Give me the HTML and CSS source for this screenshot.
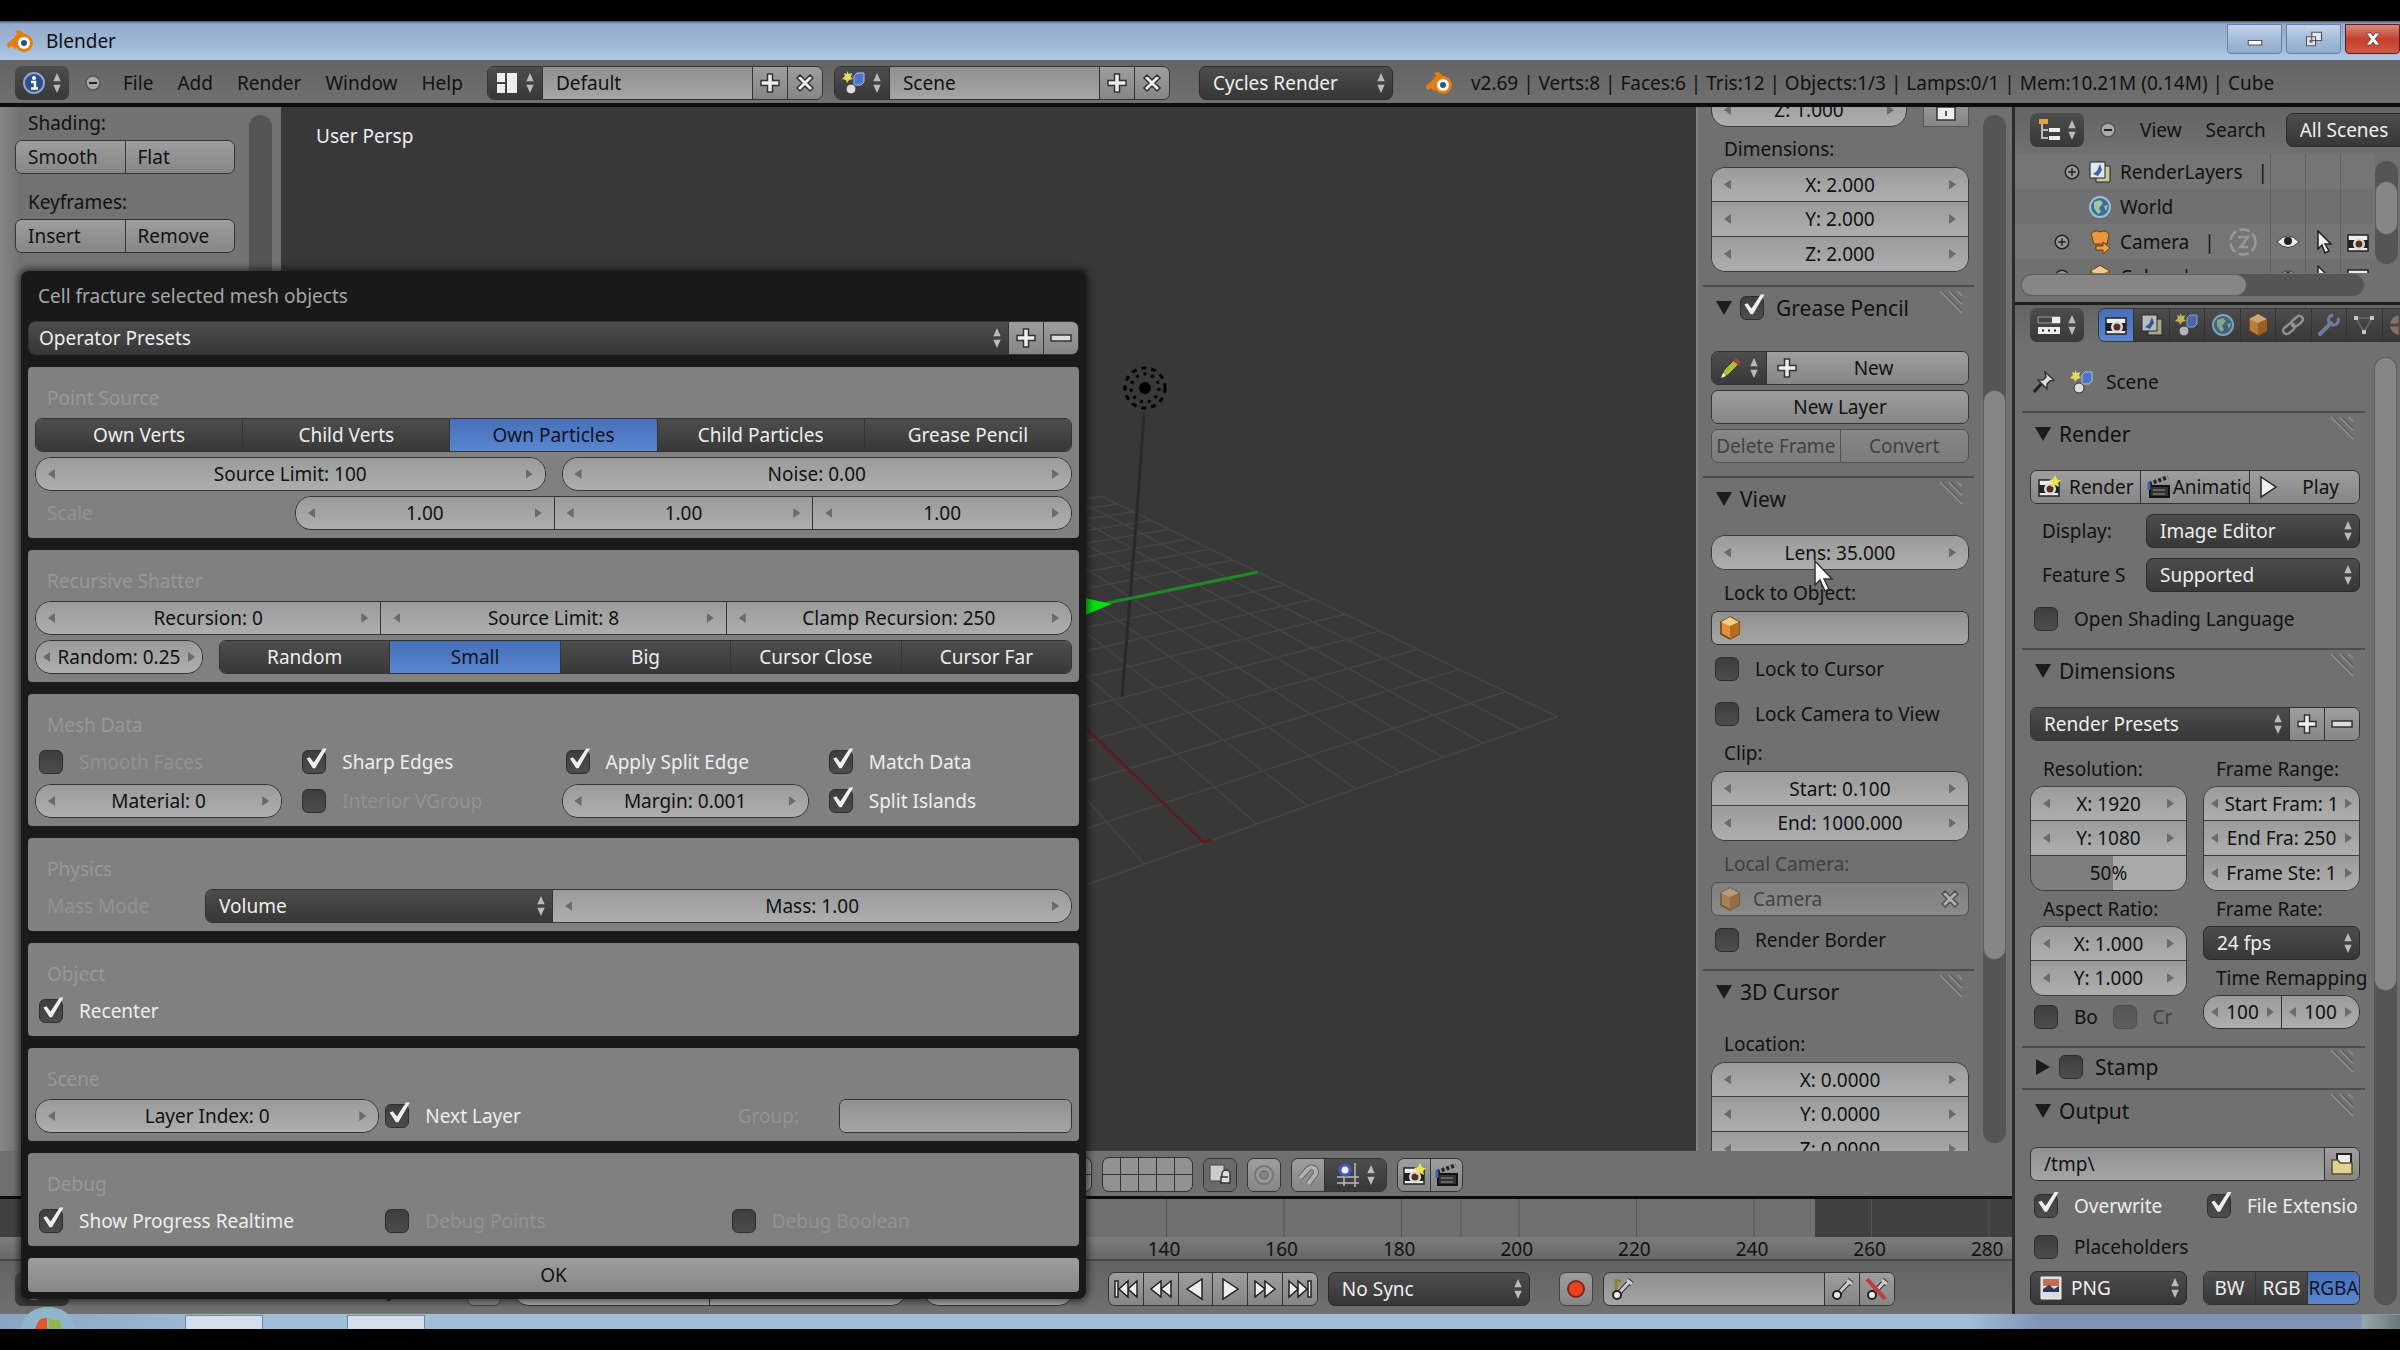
FILE: index.html
```html
<!DOCTYPE html>
<html lang="en">
  <head>
    <meta charset="UTF-8" />
    <meta name="viewport" content="width=device-width, initial-scale=1.0" />
    <title>Blender</title>
    <link rel="stylesheet" href="styles.css">
  </head>
  <body>
    <!-- shared icons -->
    <svg class="defs" aria-hidden="true">
      <symbol id="updown" viewBox="0 0 10 24"><path d="M5 1l4 9H1zM5 23l4-9H1z" fill="#bbb" /></symbol>
      <symbol id="plus" viewBox="0 0 24 24"><path d="M9.500 3h5v6.500H21v5h-6.500V21h-5v-6.500H3v-5h6.500z" fill="#eee" stroke="#333" stroke-width="1.500" /></symbol>
      <symbol id="minus" viewBox="0 0 24 24"><path d="M2 9h20v6H2z" fill="#ddd" stroke="#333" stroke-width="1.500" /></symbol>
      <symbol id="cross" viewBox="0 0 24 24"><path d="M4 7l3-3 5 5 5-5 3 3-5 5 5 5-3 3-5-5-5 5-3-3 5-5z" fill="#eee" stroke="#333" stroke-width="1.500" /></symbol>
      <symbol id="collapse" viewBox="0 0 24 24"><circle cx="12" cy="12" r="7" fill="#aaa" stroke="#555" stroke-width="1.500" /><path d="M8 12h8" stroke="#222" stroke-width="2" /></symbol>
      <symbol id="grip" viewBox="0 0 24 24"><path d="M2 2l20 20M10 2l12 12M18 2l4 4" stroke="#8c8c8c" stroke-width="1.500" /><path d="M4 2l18 18M12 2l10 10" stroke="#5d5d5d" stroke-width="1" /></symbol>
      <symbol id="logo" viewBox="0 0 28 24">
        <path d="M1 15l9-8-4-1h6L9 2l4-1 10 7-14 12-3-3-4 2z" fill="#e87d0d" />
        <circle cx="18" cy="14" r="9" fill="#e87d0d" /><circle cx="18" cy="14" r="6" fill="#fff" /><circle cx="18" cy="14" r="3" fill="#265787" />
      </symbol>
      <symbol id="info" viewBox="0 0 24 24"><circle cx="12" cy="12" r="10" fill="#2f4f86" stroke="#8ea6cf" stroke-width="2" /><circle cx="12" cy="7" r="2" fill="#fff" /><path d="M9 11h4v6M9 17.500h7" stroke="#fff" stroke-width="2.500" fill="none" /></symbol>
      <symbol id="screens" viewBox="0 0 24 24"><path d="M2 2h8v9H2zM2 13h8v9H2zM12 2h10v20H12z" fill="#eee" /></symbol>
      <symbol id="scene" viewBox="0 0 24 24"><path d="M5 0l2 3 3-1-1 4 2 2-4 1-2 3-1-3-4-1 3-3-1-3 3 1z" fill="#e6dc5a" /><path d="M12 5l3-3h7v9l-3 3h-7z" fill="#4d74c8" stroke="#a9c0ee" /><circle cx="9" cy="18" r="5" fill="#ddd" stroke="#333" /></symbol>
      <symbol id="tree" viewBox="0 0 24 24"><path d="M2 1h9v5H2z" fill="#dfa046" /><path d="M5 6v14h6M5 12h6" stroke="#bbb" stroke-width="2" fill="none" /><path d="M12 10h11v4H12zM12 18h11v4H12z" fill="#eee" /></symbol>
      <symbol id="props" viewBox="0 0 24 24"><path d="M1 4h22v6H1z" fill="#444" stroke="#999" /><path d="M15 4h8v6h-8z" fill="#eee" /><path d="M1 14h22v7H1z" fill="#eee" /><path d="M5 17.500h2m4 0h2m4 0h2" stroke="#222" stroke-width="2" /></symbol>
      <symbol id="cam" viewBox="0 0 24 24"><path d="M2 5h20v16H2z" fill="#eee" stroke="#222" stroke-width="1.500" /><path d="M2 10h20v8H2z" fill="#222" /><circle cx="13" cy="14" r="6" fill="#ddd" /><circle cx="13" cy="14" r="3.500" fill="#5a2f22" /></symbol>
      <symbol id="camstar" viewBox="0 0 24 24"><use href="#cam" /><path d="M18 0l2 4 4 1-3 3 1 4-4-2-4 2 1-4-3-3 4-1z" fill="#ece253" /></symbol>
      <symbol id="clap" viewBox="0 0 24 24"><path d="M3 11h19v11H3z" fill="#333" stroke="#111" stroke-width="2" /><path d="M2 9L21 2" stroke="#222" stroke-width="4" stroke-dasharray="3 2" /><path d="M6 15h12M6 19h12" stroke="#999" /><path d="M2 7v8" stroke="#3d64b0" stroke-width="3" /></symbol>
      <symbol id="play" viewBox="0 0 24 24"><path d="M5 2l15 10L5 22z" fill="#eee" stroke="#222" stroke-width="1.500" /></symbol>
      <symbol id="fwd" viewBox="0 0 24 24"><path d="M2 4l10 8-10 8zM12 4l10 8-10 8z" fill="#eee" stroke="#222" stroke-width="1.500" /></symbol>
      <symbol id="end" viewBox="0 0 24 24"><path d="M1 4l9 8-9 8zM10 4l9 8-9 8zM20 4h3v16h-3z" fill="#eee" stroke="#222" stroke-width="1.500" /></symbol>
      <symbol id="layers" viewBox="0 0 24 24"><path d="M8 6h14v16H8z" fill="#cfc7a0" stroke="#222" /><path d="M2 2h15v16H2z" fill="#dfe6ee" stroke="#222" /><path d="M5 14l4-3 3-7 2 6-4 6z" fill="#3a62ad" /></symbol>
      <symbol id="world" viewBox="0 0 24 24"><circle cx="12" cy="12" r="10" fill="#3d6f92" stroke="#9cc0dd" stroke-width="2" /><path d="M6 7l6-2 3 3-4 5 2 4-3 2-4-6zM16 11l4-1-2 6z" fill="#9fc6a4" /></symbol>
      <symbol id="cube" viewBox="0 0 24 24"><path d="M12 1l9 5v12l-9 5-9-5V6z" fill="#e0923d" stroke="#6b3d0d" stroke-width="1.500" /><path d="M12 1l9 5-9 4-9-4z" fill="#f7c98c" /><path d="M12 10l9-4v12l-9 5z" fill="#b96a1c" /></symbol>
      <symbol id="camobj" viewBox="0 0 24 24"><path d="M3 4q4-5 9-2 7-3 9 3l-2 9H6z" fill="#e8973a" stroke="#6b3d0d" /><path d="M8 16h7v-4l7 6-7 6v-4H8z" fill="#f0a040" stroke="#6b3d0d" /></symbol>
      <symbol id="chain" viewBox="0 0 24 24"><g fill="none" stroke="#aaa" stroke-width="2.500"><rect x="1" y="12" width="13" height="7" rx="3.500" transform="rotate(-40 8 15)" /><rect x="10" y="5" width="13" height="7" rx="3.500" transform="rotate(-40 16 9)" /></g></symbol>
      <symbol id="wrench" viewBox="0 0 24 24"><path d="M3 21l11-11" stroke="#7d93bd" stroke-width="4" stroke-linecap="round" /><path d="M21 5a5 5 0 1 1-5-3" fill="none" stroke="#7d93bd" stroke-width="3" /></symbol>
      <symbol id="mesh" viewBox="0 0 24 24"><path d="M4 5h16l-8 14z" fill="none" stroke="#777" stroke-width="1.500" /><path d="M2 3h4v4H2zM18 3h4v4h-4zM10 17h4v4h-4z" fill="#eee" /></symbol>
      <symbol id="ball" viewBox="0 0 24 24"><circle cx="12" cy="12" r="10" fill="#9c8078" /><path d="M12 2v20M2 12h20" stroke="#5b4a45" stroke-width="3" /></symbol>
      <symbol id="pin" viewBox="0 0 24 24"><path d="M2 22l8-9" stroke="#222" stroke-width="3" /><path d="M13 2l9 8-4 1-3 3 0 5-9-9 5 0 3-3z" fill="#ddd" stroke="#333" stroke-width="1.500" /></symbol>
      <symbol id="pencil" viewBox="0 0 24 24"><path d="M2 22l3-8L17 2l5 4L9 19z" fill="#aebd3a" stroke="#3b4210" /><path d="M17 2l5 4-3 3-5-4z" fill="#b03a3a" /><path d="M2 22l2-5 3 3z" fill="#eee" /></symbol>
      <symbol id="lock" viewBox="0 0 24 24"><path d="M3 9h18v13H3z" fill="#eee" stroke="#333" stroke-width="1.500" /><path d="M7 9V4h10v5" fill="none" stroke="#ddd" stroke-width="3" /><path d="M12 13v5" stroke="#555" stroke-width="2" /></symbol>
      <symbol id="locklay" viewBox="0 0 24 24"><path d="M2 2h14v16H2z" fill="#ccc" stroke="#444" /><path d="M14 14v-3a4 4 0 0 1 8 0v9h-9v-6h7" fill="#ddd" stroke="#333" stroke-width="1.500" /></symbol>
      <symbol id="ring" viewBox="0 0 24 24"><circle cx="12" cy="12" r="9" fill="#999" stroke="#777" stroke-width="2" /><circle cx="12" cy="12" r="4" fill="#888" stroke="#6b6b6b" stroke-width="1.500" /></symbol>
      <symbol id="magnet" viewBox="0 0 24 24"><path d="M4 15L12 6a4 4 0 0 1 7 6l-7 9" fill="none" stroke="#666" stroke-width="6" /><path d="M4 15L12 6a4 4 0 0 1 7 6l-7 9" fill="none" stroke="#b0b0b0" stroke-width="4" /></symbol>
      <symbol id="snap" viewBox="0 0 24 24"><path d="M8 8v15M19 0v24M1 20h22M1 14h22" stroke="#bbb" stroke-width="1.500" /><circle cx="9" cy="7" r="5" fill="#eee" stroke="#4258c9" stroke-width="3" /></symbol>
      <symbol id="key" viewBox="0 0 24 24"><path d="M9 16L20 4M17 3l5 4" stroke="#333" stroke-width="5" /><path d="M9 16L20 4M17 3l5 4" stroke="#ccc" stroke-width="3" /><circle cx="7" cy="18" r="4" fill="#eee" stroke="#222" stroke-width="2" /></symbol>
      <symbol id="keys" viewBox="0 0 24 24"><path d="M6 2v14M6 4h5" stroke="#8b8330" stroke-width="3" /><use href="#key" /></symbol>
      <symbol id="keyoff" viewBox="0 0 24 24"><use href="#key" /><path d="M2 2l18 20" stroke="#c23c3c" stroke-width="4" /></symbol>
      <symbol id="eye" viewBox="0 0 24 24"><path d="M1 12q11-12 22 0-11 11-22 0z" fill="#eee" stroke="#333" /><circle cx="12" cy="11" r="4" fill="#222" /></symbol>
      <symbol id="pointer" viewBox="0 0 24 24"><path d="M7 1v18l4-4 3 8 4-2-4-7h6z" fill="#eee" stroke="#222" stroke-width="1.500" /></symbol>
      <symbol id="folder" viewBox="0 0 24 24"><path d="M7 2h14v14H7z" fill="#eee" stroke="#222" stroke-width="2" /><path d="M2 8l6 0 2 3h12v11H2z" fill="#e0d296" stroke="#5c5222" stroke-width="1.500" /></symbol>
      <symbol id="image" viewBox="0 0 24 24"><path d="M2 1h20v22H2z" fill="#ddd" stroke="#eee" /><path d="M4 3h16v7H4z" fill="#c66b56" /><path d="M4 13l6-4 5 4 5-3v6H4z" fill="#35355c" /></symbol>
      <symbol id="dataring" viewBox="0 0 24 24"><circle cx="12" cy="12" r="10" fill="none" stroke="#999" stroke-width="2" stroke-dasharray="8 3" /><path d="M8 8l8 0-6 8h6" fill="none" stroke="#999" stroke-width="2" /></symbol>
      <symbol id="expand" viewBox="0 0 24 24"><circle cx="12" cy="12" r="9" fill="#999" stroke="#222" stroke-width="2" /><path d="M7 12h10M12 7v10" stroke="#222" stroke-width="2" /></symbol>
      <symbol id="down" viewBox="0 0 16 16"><path d="M0 1h16L8 15z" fill="#1c1c1c" /></symbol>
      <symbol id="right" viewBox="0 0 16 16"><path d="M1 0l14 8-14 8z" fill="#1c1c1c" /></symbol>
    </svg>

    <header class="titlebar">
      <svg class="icon"><use href="#logo" /></svg>
      <h1>Blender</h1>
      <button class="win" aria-label="Minimize"><svg viewBox="0 0 24 24"><path d="M3 14h18v6H3z" fill="#fff" stroke="#555" stroke-width="1.500" /></svg></button>
      <button class="win" aria-label="Restore"><svg viewBox="0 0 24 24"><path d="M9 3h13v11H9zM2 9h12v12H2z" fill="#dfe7f2" stroke="#555" stroke-width="1.500" /><path d="M6 13h4v4H6z" fill="#667" /></svg></button>
      <button class="win close" aria-label="Close"><svg viewBox="0 0 24 24"><path d="M3 4h6l3 4 3-4h6l-6 8 6 8h-6l-3-4-3 4H3l6-8z" fill="#fff" stroke="#633" /></svg></button>
    </header>

    <header class="bar info">
      <button class="dark editor" aria-label="Editor type: Info"><svg class="icon"><use href="#info" /></svg><svg class="ud"><use href="#updown" /></svg></button>
      <button class="plain" aria-label="Collapse menus"><svg class="icon"><use href="#collapse" /></svg></button>
      <nav class="menus">
        <button class="plain">File</button>
        <button class="plain">Add</button>
        <button class="plain">Render</button>
        <button class="plain">Window</button>
        <button class="plain">Help</button>
      </nav>
      <div class="join datablock">
        <button class="dark editor" aria-label="Browse screens"><svg class="icon"><use href="#screens" /></svg><svg class="ud"><use href="#updown" /></svg></button>
        <input class="text" value="Default" aria-label="Screen" />
        <button class="btn sq" aria-label="Add screen"><svg class="icon"><use href="#plus" /></svg></button>
        <button class="btn sq" aria-label="Delete screen"><svg class="icon"><use href="#cross" /></svg></button>
      </div>
      <div class="join datablock">
        <button class="dark editor" aria-label="Browse scenes"><svg class="icon"><use href="#scene" /></svg><svg class="ud"><use href="#updown" /></svg></button>
        <input class="text" value="Scene" aria-label="Scene" />
        <button class="btn sq" aria-label="Add scene"><svg class="icon"><use href="#plus" /></svg></button>
        <button class="btn sq" aria-label="Delete scene"><svg class="icon"><use href="#cross" /></svg></button>
      </div>
      <div class="menu engine"><select aria-label="Render engine"><option>Cycles Render</option></select><svg class="ud"><use href="#updown" /></svg></div>
      <svg class="icon"><use href="#logo" /></svg>
      <p class="stats">v2.69 | Verts:8 | Faces:6 | Tris:12 | Objects:1/3 | Lamps:0/1 | Mem:10.21M (0.14M) | Cube</p>
    </header>

    <main class="work">
      <div class="left">
        <section class="editor3d">
          <aside class="shelf">
            <div class="shelf-body">
              <h3>Shading:</h3>
              <div class="join"><button class="btn">Smooth</button><button class="btn">Flat</button></div>
              <h3>Keyframes:</h3>
              <div class="join"><button class="btn">Insert</button><button class="btn">Remove</button></div>
            </div>
            <div class="track"></div>
          </aside>

          <div class="view">
            <svg class="scene" viewBox="281 107 1415 1046" preserveAspectRatio="xMidYMid slice">
              <g id="grid" stroke="#444" stroke-width="1.500"></g>
              <path d="M1144 415L1136 525L1122 698" stroke="#292929" stroke-width="3" fill="none" />
              <path d="M1088 608L1258 573" stroke="#1b8a25" stroke-width="3" />
              <path d="M1080 598L1112 605L1080 618z" fill="#00e010" />
              <path d="M983 629L1203 843L1212 841" stroke="#5a2020" stroke-width="3" fill="none" />
              <g fill="none" stroke="#000" stroke-width="3">
                <circle cx="1145" cy="389" r="20" stroke-dasharray="5 5" />
                <circle cx="1145" cy="389" r="14" stroke-dasharray="3 5" />
              </g>
              <circle cx="1145" cy="389" r="6" fill="#000" />
            </svg>
            <p>User Persp</p>
          </div>

          <aside class="npanel">
            <div class="ncol">
              <div class="cut">
                <label class="num"><input value="Z: 1.000" aria-label="Scale Z" /></label>
                <button class="btn" aria-label="Lock scale Z"><svg class="icon"><use href="#lock" /></svg></button>
              </div>
              <div class="group">
                <h3>Dimensions:</h3>
                <div class="stack">
                  <label class="num"><input value="X: 2.000" aria-label="Dimension X" /></label>
                  <label class="num"><input value="Y: 2.000" aria-label="Dimension Y" /></label>
                  <label class="num"><input value="Z: 2.000" aria-label="Dimension Z" /></label>
                </div>
              </div>

              <section class="panel">
                <h2><svg class="tri"><use href="#down" /></svg><input type="checkbox" id="gp" checked /><label for="gp">Grease Pencil</label><svg class="grip"><use href="#grip" /></svg></h2>
                <div class="body spaced">
                  <div class="join">
                    <button class="dark editor" aria-label="Browse grease pencil"><svg class="icon"><use href="#pencil" /></svg><svg class="ud"><use href="#updown" /></svg></button>
                    <button class="btn new"><svg class="icon"><use href="#plus" /></svg><span>New</span></button>
                  </div>
                  <div class="join"><button class="btn">New Layer</button></div>
                  <div class="join off"><button class="btn" disabled>Delete Frame</button><button class="btn" disabled>Convert</button></div>
                </div>
              </section>

              <section class="panel">
                <h2><svg class="tri"><use href="#down" /></svg>View<svg class="grip"><use href="#grip" /></svg></h2>
                <div class="body">
                  <div class="stack"><label class="num"><input value="Lens: 35.000" aria-label="Lens" /></label></div>
                  <div>
                    <h3><label for="lockobj">Lock to Object:</label></h3>
                    <div class="join idfield"><svg class="icon"><use href="#cube" /></svg><input class="text" id="lockobj" /></div>
                  </div>
                  <div class="check"><input type="checkbox" id="lcur" /><label for="lcur">Lock to Cursor</label></div>
                  <div class="check apart"><input type="checkbox" id="lcam" /><label for="lcam">Lock Camera to View</label></div>
                  <div>
                    <h3>Clip:</h3>
                    <div class="stack">
                      <label class="num"><input value="Start: 0.100" aria-label="Clip start" /></label>
                      <label class="num"><input value="End: 1000.000" aria-label="Clip end" /></label>
                    </div>
                  </div>
                  <div class="off">
                    <h3><label for="locam">Local Camera:</label></h3>
                    <div class="join idfield"><svg class="icon"><use href="#cube" /></svg><input class="text" id="locam" value="Camera" disabled /><svg class="icon"><use href="#cross" /></svg></div>
                  </div>
                  <div class="check"><input type="checkbox" id="rb" /><label for="rb">Render Border</label></div>
                </div>
              </section>

              <section class="panel">
                <h2><svg class="tri"><use href="#down" /></svg>3D Cursor<svg class="grip"><use href="#grip" /></svg></h2>
                <div class="body">
                  <div>
                    <h3>Location:</h3>
                    <div class="stack">
                      <label class="num"><input value="X: 0.0000" aria-label="Cursor X" /></label>
                      <label class="num"><input value="Y: 0.0000" aria-label="Cursor Y" /></label>
                      <label class="num"><input value="Z: 0.0000" aria-label="Cursor Z" /></label>
                    </div>
                  </div>
                </div>
              </section>
            </div>
            <div class="track nscroll"><div class="thumb"></div></div>
          </aside>
        </section>

        <div class="bar viewbar">
          <div class="layers"><i></i><i></i><i></i><i></i><i></i><i></i><i></i><i></i><i></i><i></i></div>
          <div class="layers"><i></i><i></i><i></i><i></i><i></i><i></i><i></i><i></i><i></i><i></i></div>
          <div class="join"><button class="btn sq pressed" aria-label="Lock layers"><svg class="icon"><use href="#locklay" /></svg></button></div>
          <div class="join"><button class="btn sq" aria-label="Proportional editing"><svg class="icon"><use href="#ring" /></svg></button></div>
          <div class="join">
            <button class="btn sq" aria-label="Snap"><svg class="icon"><use href="#magnet" /></svg></button>
            <button class="dark editor" aria-label="Snap element"><svg class="icon"><use href="#snap" /></svg><svg class="ud"><use href="#updown" /></svg></button>
          </div>
          <div class="join">
            <button class="btn sq" aria-label="Render image"><svg class="icon"><use href="#camstar" /></svg></button>
            <button class="btn sq" aria-label="Render animation"><svg class="icon"><use href="#clap" /></svg></button>
          </div>
        </div>

        <section class="timeline">
          <svg class="frames" id="frames"></svg>
          <ol class="ruler">
            <li>0</li><li>20</li><li>40</li><li>60</li><li>80</li><li>100</li><li>120</li><li>140</li><li>160</li><li>180</li><li>200</li><li>220</li><li>240</li><li>260</li><li>280</li>
          </ol>
          <div class="bar timebar">
            <button class="dark editor" aria-label="Editor type: Timeline"><svg class="icon"><use href="#info" /></svg><svg class="ud"><use href="#updown" /></svg></button>
            <button class="plain" aria-label="Collapse menus"><svg class="icon"><use href="#collapse" /></svg></button>
            <nav class="menus">
              <button class="plain">View</button>
              <button class="plain">Marker</button>
              <button class="plain">Frame</button>
              <button class="plain">Playback</button>
            </nav>
            <button class="btn sq lone" aria-label="Preview range"><svg class="icon"><use href="#ring" /></svg></button>
            <div class="join pill range"><label class="num"><input value="Start: 1" aria-label="Start" /></label><label class="num"><input value="End: 250" aria-label="End" /></label></div>
            <div class="join pill current"><label class="num"><input value="1" aria-label="Current frame" /></label></div>
            <div class="join transport">
              <button class="btn sq" aria-label="First frame"><svg class="icon flip"><use href="#end" /></svg></button>
              <button class="btn sq" aria-label="Previous keyframe"><svg class="icon flip"><use href="#fwd" /></svg></button>
              <button class="btn sq" aria-label="Play backwards"><svg class="icon flip"><use href="#play" /></svg></button>
              <button class="btn sq" aria-label="Play"><svg class="icon"><use href="#play" /></svg></button>
              <button class="btn sq" aria-label="Next keyframe"><svg class="icon"><use href="#fwd" /></svg></button>
              <button class="btn sq" aria-label="Last frame"><svg class="icon"><use href="#end" /></svg></button>
            </div>
            <div class="menu sync"><select aria-label="Sync mode"><option>No Sync</option></select><svg class="ud"><use href="#updown" /></svg></div>
            <button class="btn sq lone" aria-label="Record"><svg class="icon" viewBox="0 0 24 24"><circle cx="12" cy="12" r="8" fill="#e8431c" stroke="#7a2a1a" stroke-width="2" /></svg></button>
            <div class="join idfield keying">
              <svg class="icon"><use href="#keys" /></svg><input class="text" aria-label="Keying set" />
              <button class="btn sq" aria-label="Insert keyframe"><svg class="icon"><use href="#key" /></svg></button>
              <button class="btn sq" aria-label="Delete keyframe"><svg class="icon"><use href="#keyoff" /></svg></button>
            </div>
          </div>
        </section>
      </div>

      <div class="right">
        <div class="bar outbar">
          <button class="dark editor" aria-label="Editor type: Outliner"><svg class="icon"><use href="#tree" /></svg><svg class="ud"><use href="#updown" /></svg></button>
          <button class="plain" aria-label="Collapse menus"><svg class="icon"><use href="#collapse" /></svg></button>
          <nav class="menus">
            <button class="plain">View</button>
            <button class="plain">Search</button>
          </nav>
          <div class="menu scenes"><select aria-label="Display mode"><option>All Scenes</option></select></div>
        </div>
        <div class="outliner">
          <ul>
            <li class="deep"><svg class="exp"><use href="#expand" /></svg><svg class="icon"><use href="#layers" /></svg><span>RenderLayers</span><b>|</b><i></i><i></i><i></i></li>
            <li class="deep"><svg class="exp"></svg><svg class="icon"><use href="#world" /></svg><span>World</span><b></b><i></i><i></i><i></i></li>
            <li><svg class="exp"><use href="#expand" /></svg><svg class="icon"><use href="#camobj" /></svg><span>Camera</span><b>|</b><svg class="data"><use href="#dataring" /></svg><i><svg class="icon"><use href="#eye" /></svg></i><i><svg class="icon"><use href="#pointer" /></svg></i><i><svg class="icon"><use href="#cam" /></svg></i></li>
            <li><svg class="exp"><use href="#expand" /></svg><svg class="icon"><use href="#cube" /></svg><span>Cube</span><b>|</b><i><svg class="icon"><use href="#eye" /></svg></i><i><svg class="icon"><use href="#pointer" /></svg></i><i><svg class="icon"><use href="#cam" /></svg></i></li>
          </ul>
          <div class="track oscroll"><div class="thumb"></div></div>
        </div>
        <div class="hscroll"><div class="thumb"></div></div>

        <div class="bar propbar">
          <button class="dark editor" aria-label="Editor type: Properties"><svg class="icon"><use href="#props" /></svg><svg class="ud"><use href="#updown" /></svg></button>
          <div class="join tabs">
            <button class="dark on" aria-label="Render"><svg class="icon"><use href="#cam" /></svg></button>
            <button class="dark" aria-label="Render layers"><svg class="icon"><use href="#layers" /></svg></button>
            <button class="dark" aria-label="Scene"><svg class="icon"><use href="#scene" /></svg></button>
            <button class="dark" aria-label="World"><svg class="icon"><use href="#world" /></svg></button>
            <button class="dark" aria-label="Object"><svg class="icon"><use href="#cube" /></svg></button>
            <button class="dark" aria-label="Constraints"><svg class="icon"><use href="#chain" /></svg></button>
            <button class="dark" aria-label="Modifiers"><svg class="icon"><use href="#wrench" /></svg></button>
            <button class="dark" aria-label="Data"><svg class="icon"><use href="#mesh" /></svg></button>
            <button class="dark" aria-label="Material"><svg class="icon"><use href="#ball" /></svg></button>
          </div>
        </div>

        <div class="props">
          <div class="pcol">
            <div class="context"><svg class="icon"><use href="#pin" /></svg><svg class="icon"><use href="#scene" /></svg>Scene</div>

            <section class="panel">
              <h2><svg class="tri"><use href="#down" /></svg>Render<svg class="grip"><use href="#grip" /></svg></h2>
              <div class="body">
                <div class="join actions">
                  <button class="btn"><svg class="icon"><use href="#camstar" /></svg><span>Render</span></button>
                  <button class="btn"><svg class="icon"><use href="#clap" /></svg><span>Animation</span></button>
                  <button class="btn"><svg class="icon"><use href="#play" /></svg><span>Play</span></button>
                </div>
                <div class="field"><label for="disp">Display:</label><div class="menu"><select id="disp"><option>Image Editor</option></select><svg class="ud"><use href="#updown" /></svg></div></div>
                <div class="field"><label for="feat">Feature S</label><div class="menu"><select id="feat"><option>Supported</option></select><svg class="ud"><use href="#updown" /></svg></div></div>
                <div class="check"><input type="checkbox" id="osl" /><label for="osl">Open Shading Language</label></div>
              </div>
            </section>

            <section class="panel">
              <h2><svg class="tri"><use href="#down" /></svg>Dimensions<svg class="grip"><use href="#grip" /></svg></h2>
              <div class="body">
                <div class="join">
                  <div class="menu flat"><select aria-label="Render presets"><option>Render Presets</option></select><svg class="ud"><use href="#updown" /></svg></div>
                  <button class="btn sq" aria-label="Add preset"><svg class="icon"><use href="#plus" /></svg></button>
                  <button class="btn sq" aria-label="Remove preset"><svg class="icon"><use href="#minus" /></svg></button>
                </div>
                <div class="two">
                  <div class="half">
                    <h3>Resolution:</h3>
                    <div class="stack">
                      <label class="num"><input value="X: 1920" aria-label="Resolution X" /></label>
                      <label class="num"><input value="Y: 1080" aria-label="Resolution Y" /></label>
                      <label class="num percent"><input value="50%" aria-label="Resolution percentage" /></label>
                    </div>
                    <h3>Aspect Ratio:</h3>
                    <div class="stack">
                      <label class="num"><input value="X: 1.000" aria-label="Aspect X" /></label>
                      <label class="num"><input value="Y: 1.000" aria-label="Aspect Y" /></label>
                    </div>
                    <div class="pair">
                      <div class="check"><input type="checkbox" id="bo" /><label for="bo">Bo</label></div>
                      <div class="check off"><input type="checkbox" id="cr" disabled /><label for="cr">Cr</label></div>
                    </div>
                  </div>
                  <div class="half">
                    <h3>Frame Range:</h3>
                    <div class="stack tight">
                      <label class="num"><input value="Start Fram: 1" aria-label="Start frame" /></label>
                      <label class="num"><input value="End Fra: 250" aria-label="End frame" /></label>
                      <label class="num"><input value="Frame Ste: 1" aria-label="Frame step" /></label>
                    </div>
                    <h3><label for="fps">Frame Rate:</label></h3>
                    <div class="menu"><select id="fps"><option>24 fps</option></select><svg class="ud"><use href="#updown" /></svg></div>
                    <h3>Time Remapping</h3>
                    <div class="join pill tight"><label class="num"><input value="100" aria-label="Old mapping" /></label><label class="num"><input value="100" aria-label="New mapping" /></label></div>
                  </div>
                </div>
              </div>
            </section>

            <section class="panel short">
              <h2><svg class="tri"><use href="#right" /></svg><input type="checkbox" id="stamp" /><label for="stamp">Stamp</label><svg class="grip"><use href="#grip" /></svg></h2>
            </section>

            <section class="panel">
              <h2><svg class="tri"><use href="#down" /></svg>Output<svg class="grip"><use href="#grip" /></svg></h2>
              <div class="body output">
                <div class="join"><input class="text" value="/tmp\" aria-label="Output path" /><button class="btn sq" aria-label="Browse"><svg class="icon"><use href="#folder" /></svg></button></div>
                <div class="two">
                  <div class="check half"><input type="checkbox" id="ow" checked /><label for="ow">Overwrite</label></div>
                  <div class="check half"><input type="checkbox" id="fe" checked /><label for="fe">File Extensio</label></div>
                </div>
                <div class="check"><input type="checkbox" id="ph" /><label for="ph">Placeholders</label></div>
                <div class="two">
                  <div class="menu half"><svg class="icon"><use href="#image" /></svg><select aria-label="File format"><option>PNG</option></select><svg class="ud"><use href="#updown" /></svg></div>
                  <div class="join half modes"><button class="dark">BW</button><button class="dark">RGB</button><button class="dark on">RGBA</button></div>
                </div>
              </div>
            </section>
          </div>
          <div class="track pscroll"><div class="thumb"></div></div>
        </div>
      </div>
    </main>

    <footer class="taskbar">
      <svg class="orb" viewBox="0 0 56 22"><path d="M0 22Q6 0 28 0T56 22z" fill="#8fb4cc" /><path d="M16 20q2-10 11-9v11H15z" fill="#dd5a26" /><path d="M29 11q8 4 10 1l3 10H29z" fill="#8cb84a" /></svg>
      <i></i><i></i>
      <b></b>
    </footer>

    <form class="dialog">
      <h2>Cell fracture selected mesh objects</h2>
      <div class="join presets">
        <div class="menu flat"><select aria-label="Operator presets"><option>Operator Presets</option></select><svg class="ud"><use href="#updown" /></svg></div>
        <button type="button" class="btn sq" aria-label="Add preset"><svg class="icon"><use href="#plus" /></svg></button>
        <button type="button" class="btn sq" aria-label="Remove preset"><svg class="icon"><use href="#minus" /></svg></button>
      </div>

      <fieldset>
        <h3>Point Source</h3>
        <div class="join"><button type="button" class="dark">Own Verts</button><button type="button" class="dark">Child Verts</button><button type="button" class="dark on">Own Particles</button><button type="button" class="dark">Child Particles</button><button type="button" class="dark">Grease Pencil</button></div>
        <div class="cols2">
          <div class="join pill"><label class="num"><input value="Source Limit: 100" aria-label="Source limit" /></label></div>
          <div class="join pill"><label class="num"><input value="Noise: 0.00" aria-label="Noise" /></label></div>
        </div>
        <div class="scale">
          <span class="dim">Scale</span>
          <div class="join pill"><label class="num"><input value="1.00" aria-label="Scale X" /></label><label class="num"><input value="1.00" aria-label="Scale Y" /></label><label class="num"><input value="1.00" aria-label="Scale Z" /></label></div>
        </div>
      </fieldset>

      <fieldset>
        <h3>Recursive Shatter</h3>
        <div class="join pill"><label class="num"><input value="Recursion: 0" aria-label="Recursion" /></label><label class="num"><input value="Source Limit: 8" aria-label="Recursion source limit" /></label><label class="num"><input value="Clamp Recursion: 250" aria-label="Clamp recursion" /></label></div>
        <div class="random">
          <div class="join pill tight"><label class="num"><input value="Random: 0.25" aria-label="Random factor" /></label></div>
          <div class="join"><button type="button" class="dark">Random</button><button type="button" class="dark on">Small</button><button type="button" class="dark">Big</button><button type="button" class="dark">Cursor Close</button><button type="button" class="dark">Cursor Far</button></div>
        </div>
      </fieldset>

      <fieldset>
        <h3>Mesh Data</h3>
        <div class="cols4">
          <div class="check dim"><input type="checkbox" id="sf" /><label for="sf">Smooth Faces</label></div>
          <div class="check"><input type="checkbox" id="se" checked /><label for="se">Sharp Edges</label></div>
          <div class="check"><input type="checkbox" id="ase" checked /><label for="ase">Apply Split Edge</label></div>
          <div class="check"><input type="checkbox" id="md" checked /><label for="md">Match Data</label></div>
          <div class="join pill"><label class="num"><input value="Material: 0" aria-label="Material" /></label></div>
          <div class="check dim"><input type="checkbox" id="iv" /><label for="iv">Interior VGroup</label></div>
          <div class="join pill"><label class="num"><input value="Margin: 0.001" aria-label="Margin" /></label></div>
          <div class="check"><input type="checkbox" id="si" checked /><label for="si">Split Islands</label></div>
        </div>
      </fieldset>

      <fieldset>
        <h3>Physics</h3>
        <div class="mass">
          <label class="dim" for="mode">Mass Mode</label>
          <div class="join pill-r">
            <div class="menu flat"><select id="mode"><option>Volume</option></select><svg class="ud"><use href="#updown" /></svg></div>
            <label class="num"><input value="Mass: 1.00" aria-label="Mass" /></label>
          </div>
        </div>
      </fieldset>

      <fieldset>
        <h3>Object</h3>
        <div class="check"><input type="checkbox" id="rc" checked /><label for="rc">Recenter</label></div>
      </fieldset>

      <fieldset>
        <h3>Scene</h3>
        <div class="cols3">
          <div class="join pill"><label class="num"><input value="Layer Index: 0" aria-label="Layer index" /></label></div>
          <div class="check"><input type="checkbox" id="nl" checked /><label for="nl">Next Layer</label></div>
          <div class="grp"><label class="dim" for="grp">Group:</label><div class="join"><input class="text" id="grp" /></div></div>
        </div>
      </fieldset>

      <fieldset>
        <h3>Debug</h3>
        <div class="cols3">
          <div class="check"><input type="checkbox" id="spr" checked /><label for="spr">Show Progress Realtime</label></div>
          <div class="check dim"><input type="checkbox" id="dp" /><label for="dp">Debug Points</label></div>
          <div class="check dim"><input type="checkbox" id="db" /><label for="db">Debug Boolean</label></div>
        </div>
      </fieldset>
      <button type="button" class="btn ok">OK</button>
    </form>

    <svg class="cursor" viewBox="0 0 20 32"><path d="M1 1v24l5-5 5 11 4-2-5-10h8z" fill="#fff" stroke="#333" stroke-width="1.500" /></svg>

    <script>
      const ns = "http://www.w3.org/2000/svg";

      function addLine(parent, x1, y1, x2, y2) {
        const line = document.createElementNS(ns, "line");
        line.setAttribute("x1", x1);
        line.setAttribute("y1", y1);
        line.setAttribute("x2", x2);
        line.setAttribute("y2", y2);
        parent.appendChild(line);
      }

      // floor plane to view coordinates, s along the red axis, t along the green one
      function project(s, t) {
        const w = 1 - 0.367 * s + 0.168 * t;
        return [(983 - 221.9 * s + 486.3 * t) / w, (629 - 94.4 * s + 40.3 * t) / w];
      }

      const grid = document.getElementById("grid");
      for (let i = -8; i <= 8; i++) {
        const k = i / 8;
        addLine(grid, ...project(k, -1), ...project(k, 1));
        addLine(grid, ...project(-1, k), ...project(1, k));
      }

      // timeline: one line every 20 frames, light area from start to end frame
      const frames = document.getElementById("frames");
      const range = document.createElementNS(ns, "rect");
      range.setAttribute("x", 350);
      range.setAttribute("width", 1465);
      range.setAttribute("height", 40);
      range.setAttribute("fill", "#707070");
      frames.appendChild(range);
      for (let f = 0; f <= 280; f += 20) {
        const x = 344 + f * 5.875;
        addLine(frames, x, 0, x, 40);
      }
      addLine(frames, 1461, 0, 1461, 40);
    </script>
  </body>
</html>
```

FILE: styles.css
```css
* {
  box-sizing: border-box;
}

body {
  margin: 0;
  height: 100vh;
  padding: 21px 0;
  display: flex;
  flex-direction: column;
  overflow: hidden;
  position: relative;
  background: #000;
  color: #111;
  font-family: "Noto Sans", "Open Sans", sans-serif;
  font-size: 19px;
  line-height: 24px;
}

h1, h2, h3, p, ul, ol, fieldset {
  margin: 0;
  padding: 0;
  border: 0;
  font-size: 19px;
  font-weight: normal;
  list-style: none;
  min-width: 0;
}

button, input, select {
  font: inherit;
  color: inherit;
  margin: 0;
  padding: 0;
  border: 0;
  background: none;
  border-radius: 0;
  appearance: none;
  min-width: 0;
  outline: none;
}

svg {
  display: block;
  flex: none;
}

.defs {
  position: absolute;
  width: 0;
  height: 0;
}

.icon {
  width: 28px;
  height: 24px;
}

.ud {
  width: 14px;
  height: 22px;
}

.flip {
  transform: scaleX(-1);
}

/* window frame */
.titlebar {
  height: 39px;
  flex: none;
  display: flex;
  align-items: center;
  padding-left: 6px;
  background: linear-gradient(#4c5a70, #92abcf 3px, #a3bdda 75%, #b3cae6);
}

.titlebar h1 {
  flex: 1;
  padding-left: 12px;
}

.win {
  width: 55px;
  height: 30px;
  margin: 0 0 4px 4px;
  display: grid;
  place-items: center;
  border: 1px solid #6480a8;
  border-radius: 0 0 4px 4px;
  background: linear-gradient(#c5d6ea, #a4bcd9 50%, #90acd0);
}

.win svg {
  width: 20px;
  height: 18px;
}

.win.close {
  border-color: #5b1d1d;
  background: linear-gradient(#d98b80, #c5402c 50%, #cf5a45);
}

.taskbar {
  height: 15px;
  flex: none;
  display: flex;
  align-items: flex-end;
  padding-left: 20px;
  background: linear-gradient(90deg, #8ba3c0, #a0bdd7 10%, #a0bdd7 82%, #8294b4 85%);
}

.taskbar i {
  width: 78px;
  height: 14px;
  margin-left: 84px;
  background: #d5dfec;
  border: 1px solid #6f859d;
  border-bottom: 0;
}

.taskbar i:first-of-type {
  margin-left: 109px;
}

.taskbar b {
  width: 38px;
  height: 14px;
  margin-left: auto;
  background: linear-gradient(90deg, #97a9ad, #66787c);
}

.orb {
  width: 56px;
  height: 22px;
}

/* header bars */
.bar {
  flex: none;
  display: flex;
  align-items: center;
  background: linear-gradient(#646464, #707070);
}

.info {
  height: 47px;
  padding: 3px 15px 0;
  border-bottom: 4px solid #0c0c0c;
}

.menus {
  display: flex;
  gap: 24px;
}

.plain,
.menus {
  display: flex;
  flex: none;
}

.info > .plain {
  margin: 0 16px 0 10px;
}

.datablock {
  width: 336px;
  margin-left: 11px;
}

.menus + .datablock {
  margin-left: 24px;
}

.engine {
  width: 194px;
  margin: 0 32px 0 29px;
}

.stats {
  padding-left: 18px;
  white-space: nowrap;
}

/* widgets */
.join {
  display: flex;
  height: 34px;
  border: 1px solid #333;
  border-radius: 7px;
  overflow: hidden;
}

.join > * {
  flex: 1;
}

.join > * + * {
  border-left: 1px solid #333;
}

.join > .sq,
.sq {
  flex: none;
  width: 35px;
}

.join > .editor,
.editor {
  flex: none;
  width: 54px;
}

.btn {
  background: linear-gradient(#9e9e9e, #868686);
  display: flex;
  align-items: center;
  justify-content: center;
  white-space: nowrap;
}

.btn.pressed {
  background: #6a6a6a;
}

.lone {
  height: 34px;
  border: 1px solid #444;
  border-radius: 7px;
}

.dark {
  height: 34px;
  display: flex;
  align-items: center;
  justify-content: center;
  gap: 2px;
  color: #eee;
  background: linear-gradient(#4d4d4d, #383838);
  border-radius: 7px;
}

.join > .dark {
  height: auto;
  border-radius: 0;
}

.dark.on {
  color: #0c1524;
  background: linear-gradient(#4670b9, #5a86cf);
}

.text {
  padding: 0 13px;
  background: linear-gradient(#909090, #a5a5a5);
}

.menu {
  display: flex;
  align-items: center;
  height: 34px;
  padding: 0 4px 0 13px;
  color: #eee;
  background: linear-gradient(#4c4c4c, #373737);
  border: 1px solid #2a2a2a;
  border-radius: 7px;
}

.menu select {
  flex: 1;
  height: 24px;
}

.menu.flat {
  height: auto;
  border: 0;
  border-radius: 0;
}

.num {
  display: flex;
  align-items: center;
  height: 34px;
  padding: 0 12px;
  background: linear-gradient(#9b9b9b, #aeaeae);
}

.num input {
  flex: 1;
  width: 0;
  text-align: center;
}

.num::before,
.num::after {
  content: "";
  width: 7px;
  height: 10px;
  background: #6b6b6b;
  clip-path: polygon(100% 0, 100% 100%, 0 50%);
}

.num::after {
  clip-path: polygon(0 0, 0 100%, 100% 50%);
}

.join > .num {
  height: auto;
}

.tight .num {
  padding: 0 7px;
}

.percent {
  background: linear-gradient(90deg, #7f7f7f 53%, #a8a8a8 53%);
}

.percent::before,
.percent::after {
  visibility: hidden;
}

.stack {
  border: 1px solid #3c3c3c;
  border-radius: 14px;
  overflow: hidden;
}

.stack .num {
  height: 33px;
}

.stack .num + .num {
  height: 35px;
  border-top: 1px solid #3c3c3c;
}

.pill {
  border-radius: 16px;
}

.pill-r {
  border-radius: 7px 16px 16px 7px;
}

.check {
  display: flex;
  align-items: center;
  gap: 16px;
  height: 33px;
  padding-left: 4px;
  white-space: nowrap;
}

input[type="checkbox"] {
  flex: none;
  width: 24px;
  height: 24px;
  border: 1px solid #2e2e2e;
  border-radius: 6px;
  background: linear-gradient(#3e3e3e, #4c4c4c);
}

input[type="checkbox"]:checked::before {
  content: "";
  display: block;
  width: 24px;
  height: 22px;
  margin-top: -3px;
  background: #eee;
  clip-path: polygon(14% 48%, 27% 42%, 44% 66%, 82% 2%, 98% 2%, 50% 92%, 40% 92%);
}

.off {
  opacity: 0.5;
}

/* main areas */
.work {
  flex: 1;
  min-height: 0;
  display: flex;
}

.left {
  flex: 1;
  min-width: 0;
  display: flex;
  flex-direction: column;
}

.right {
  width: 388px;
  flex: none;
  display: flex;
  flex-direction: column;
  overflow: hidden;
  background: #707070;
  border-left: 3px solid #2b2b2b;
}

.editor3d {
  flex: 1;
  min-height: 0;
  display: flex;
}

.shelf {
  width: 281px;
  flex: none;
  display: flex;
  background: linear-gradient(90deg, #868686, #727272 20px);
}

.shelf-body {
  flex: 1;
  padding-left: 15px;
}

.shelf h3 {
  padding: 4px 13px 5px;
}

.shelf .join + h3 {
  padding-top: 16px;
}

.shelf .btn {
  justify-content: flex-start;
  padding-left: 12px;
}

.track {
  width: 23px;
  flex: none;
  margin: 8px 9px 0 16px;
  background: #555;
  border-radius: 12px;
}

.shelf .track {
  margin-left: 14px;
}

.thumb {
  background: #868686;
  border: 1px solid #5e5e5e;
  border-radius: 12px;
}

.view {
  flex: 1;
  position: relative;
  background: #383838;
}

.view p {
  position: relative;
  padding: 17px 35px;
  color: #eee;
}

.scene {
  position: absolute;
  inset: 0;
  width: 100%;
  height: 100%;
}

.npanel {
  width: 316px;
  flex: none;
  display: flex;
  overflow: hidden;
  background: #707070;
  border-left: 2px solid #838383;
}

.ncol {
  flex: 1;
  min-width: 0;
  padding-left: 13px;
}

.cut {
  height: 20px;
  display: flex;
  align-items: flex-end;
  gap: 16px;
  overflow: hidden;
}

.cut .num {
  flex: 1;
  min-width: 0;
  border: 1px solid #3c3c3c;
  border-radius: 0 0 16px 16px;
}

.cut .btn {
  width: 46px;
  height: 34px;
  border: 1px solid #555;
}

.ncol h3 {
  height: 34px;
  padding: 4px 0 0 13px;
}

.half h3 {
  height: 35px;
  padding: 6px 0 0 13px;
  white-space: nowrap;
}

.group {
  margin-top: 6px;
}

.panel {
  margin-top: 13px;
}

.panel h2 {
  height: 46px;
  display: flex;
  align-items: center;
  gap: 8px;
  margin: 0 -5px 0 -8px;
  padding: 0 10px 2px 13px;
  border-top: 2px solid #4c4c4c;
  font-size: 21px;
}

.panel h2 label {
  padding-left: 4px;
}

.tri {
  width: 16px;
  height: 16px;
}

.grip {
  width: 26px;
  height: 26px;
  margin: -12px 0 0 auto;
}

.body {
  display: flex;
  flex-direction: column;
  gap: 7px;
  padding-top: 13px;
}

.body.spaced {
  gap: 5px;
  padding-top: 20px;
}

.apart {
  margin-top: 5px;
}

.new {
  justify-content: flex-start;
  padding-left: 6px;
}

.new span {
  flex: 1;
  padding-right: 22px;
}

.idfield {
  background: linear-gradient(#909090, #a5a5a5);
  align-items: center;
}

.idfield > .icon {
  flex: none;
  margin: 0 4px;
}

.idfield > * + .text,
.idfield > .icon + .icon,
.idfield > .text + .icon {
  border: 0;
}

.idfield .text {
  height: 100%;
  padding: 0 5px;
  background: none;
}

.idfield .btn {
  height: 100%;
}

.nscroll {
  margin: 8px 6px 8px 14px;
}

.nscroll .thumb {
  height: 570px;
  margin-top: 275px;
}

/* 3D view header */
.viewbar {
  height: 48px;
  gap: 10px;
  padding: 2px 0 0 1001px;
  background: #707070;
  border-bottom: 3px solid #0c0c0c;
}

.layers {
  display: grid;
  grid-template-columns: repeat(5, 17px);
  grid-auto-rows: 16px;
  gap: 1px;
  border: 1px solid #333;
  border-radius: 7px;
  overflow: hidden;
  background: #333;
}

.layers i {
  background: #929292;
}

.viewbar .sq {
  width: 32px;
}

.viewbar .join .editor {
  width: 62px;
}

/* timeline */
.timeline {
  flex: none;
  height: 115px;
  display: flex;
  flex-direction: column;
  overflow: hidden;
}

.frames {
  width: 100%;
  height: 38px;
  background: #414141;
}

.frames line {
  stroke: #555;
}

.ruler {
  height: 24px;
  display: grid;
  grid-template-columns: repeat(15, 1fr);
  padding-left: 282px;
  margin-right: -34px;
  text-align: center;
  line-height: 25px;
  background: linear-gradient(#7c7c7c, #686868);
  border-bottom: 2px solid #4a4a4a;
}

.timebar {
  flex: 1;
  padding: 3px 0 0 15px;
}

.timebar > .plain {
  margin: 0 18px 0 10px;
}

.timebar > .lone {
  width: 34px;
  margin-left: 29px;
}

.range {
  width: 394px;
  margin-left: 12px;
}

.current {
  width: 151px;
  margin-left: 16px;
}

.transport {
  width: 210px;
  margin-left: 34px;
}

.transport > .sq {
  flex: 1;
}

.sync {
  width: 202px;
  margin-left: 10px;
}

.keying {
  width: 292px;
  margin-left: 10px;
}

/* outliner */
.outbar,
.propbar {
  padding-left: 15px;
}

.outbar {
  height: 45px;
}

.outbar > .plain {
  margin: 0 18px 0 10px;
}

.scenes {
  width: 140px;
  flex: none;
  margin-left: 20px;
}

.outliner {
  height: 121px;
  display: flex;
  overflow: hidden;
}

.outliner ul {
  flex: 1;
  padding-top: 2px;
}

.outliner li {
  height: 35px;
  display: flex;
  align-items: center;
  padding-left: 38px;
}

.outliner li.deep {
  padding-left: 48px;
}

.deep .exp {
  margin-right: 5px;
}

.outliner li:nth-child(odd) {
  background: #757575;
}

.exp {
  width: 18px;
  height: 18px;
  margin-right: 15px;
}

.outliner li span {
  padding-left: 6px;
}

.outliner li b {
  flex: 1;
  padding-left: 15px;
  font-weight: normal;
}

.outliner li i {
  width: 35px;
  height: 35px;
  display: grid;
  place-items: center;
  border-left: 1px solid #626262;
}

.data {
  width: 30px;
  height: 30px;
  margin-right: 12px;
}

.oscroll {
  margin: 9px 2px 9px 0;
}

.oscroll .thumb {
  height: 54px;
  margin-top: 20px;
}

.hscroll {
  height: 22px;
  margin: 1px 36px 6px 6px;
  background: #555;
  border-radius: 12px;
}

.hscroll .thumb {
  width: 66%;
  height: 22px;
}

/* properties */
.propbar {
  height: 43px;
  border-top: 3px solid #1d1d1d;
}

.tabs {
  flex: none;
  width: 320px;
  margin-left: 14px;
}

.tabs .dark:not(.on) .icon {
  opacity: 0.75;
}

.props {
  flex: 1;
  min-height: 0;
  display: flex;
  overflow: hidden;
}

.pcol {
  width: 345px;
  padding-left: 15px;
}

.context {
  height: 66px;
  display: flex;
  align-items: center;
  gap: 10px;
  padding-top: 8px;
}

.context + .panel {
  margin-top: 0;
}

.pcol .body {
  gap: 10px;
  padding-top: 13px;
}

.pcol .body.output {
  gap: 8px;
}

.actions .btn {
  justify-content: flex-start;
  padding-left: 4px;
  overflow: hidden;
}

.actions .btn span {
  flex: 1;
}

.field {
  display: flex;
  align-items: center;
}

.field label {
  width: 116px;
  padding-left: 12px;
}

.field .menu {
  flex: 1;
}

.two {
  display: grid;
  grid-template-columns: 157px 157px;
  justify-content: space-between;
}

.two > .menu {
  padding-left: 6px;
  gap: 6px;
}

.pair {
  display: grid;
  grid-template-columns: 1fr 1fr;
  margin-top: 4px;
}

.short h2 {
  height: 42px;
}

.short + .panel {
  margin-top: 0;
}

input:checked + label {
  color: #eee;
}

.panel h2 input:checked + label {
  color: #111;
}

.pscroll {
  margin: 12px 3px 9px 14px;
}

.pscroll .thumb {
  height: 634px;
}

/* operator dialog */
.dialog {
  position: absolute;
  left: 21px;
  top: 271px;
  width: 1065px;
  padding: 0 7px 7px;
  display: flex;
  flex-direction: column;
  gap: 12px;
  color: #eee;
  background: #191919;
  border-radius: 8px;
  box-shadow: 0 0 6px 3px rgba(0, 0, 0, 0.5);
}

.dialog > h2 {
  height: 38px;
  padding: 13px 10px 0;
  color: #a5a5a5;
}

.dialog .btn,
.dialog .num,
.dialog .text {
  color: #111;
}

.presets .menu {
  padding-left: 10px;
}

.dialog fieldset {
  display: flex;
  flex-direction: column;
  gap: 5px;
  padding: 14px 7px 8px;
  background: #808080;
  border-radius: 4px;
}

.dialog h3 {
  height: 32px;
  padding: 5px 12px 0;
  color: #979797;
}

.dialog .check {
  height: 34px;
}

.dim {
  color: #929292;
}

.cols2,
.cols3,
.cols4,
.scale,
.random,
.mass {
  display: grid;
  grid-template-columns: 1fr 1fr;
  align-items: center;
  gap: 5px 16px;
}

.scale {
  grid-template-columns: 244px 1fr;
}

.scale .dim,
.mass .dim {
  padding-left: 12px;
}

.random {
  grid-template-columns: 168px 1fr;
}

.cols4 {
  grid-template-columns: repeat(4, 1fr);
}

.cols3 {
  grid-template-columns: repeat(3, 1fr);
  column-gap: 2px;
}

.mass {
  grid-template-columns: 168px 1fr;
  column-gap: 2px;
}

.mass .menu {
  flex: 2;
}

.mass .num {
  flex: 3;
}

.grp {
  display: grid;
  grid-template-columns: 1fr 233px;
  align-items: center;
  padding-left: 10px;
}

.ok {
  height: 34px;
  border-radius: 4px;
}

.cursor {
  position: absolute;
  left: 1814px;
  top: 560px;
  width: 20px;
  height: 32px;
}
```
